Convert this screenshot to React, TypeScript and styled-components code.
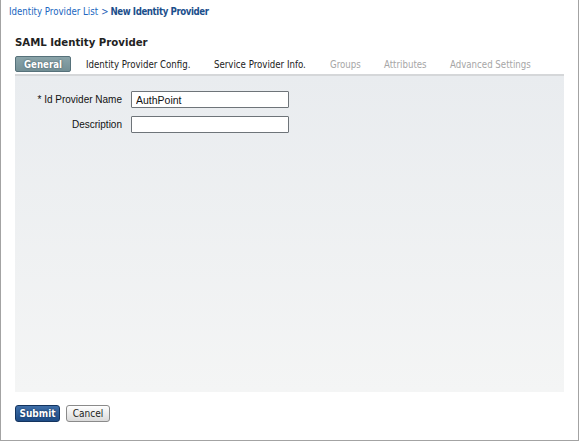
import React from "react";
import styled, { createGlobalStyle } from "styled-components";

const Global = createGlobalStyle`
  html, body { margin: 0; padding: 0; background: #fff; }
  body { font-family: "DejaVu Sans", sans-serif; }
  * { box-sizing: border-box; }
`;

const Frame = styled.div`
  width: 579px;
  height: 441px;
  border-left: 1px solid #a3a3a3;
  border-right: 1px solid #a3a3a3;
  border-bottom: 1px solid #a3a3a3;
  display: flex;
  flex-direction: column;
  background: #fff;
`;

const Breadcrumb = styled.div`
  padding: 6px 0 0 8px;
  height: 24px;
  font-size: 9.6px;
  color: #1f62b8;
  font-family: "DejaVu Sans Condensed", "DejaVu Sans", sans-serif;
  white-space: nowrap;
`;

const Crumb = styled.a`
  color: #2066c0;
  text-decoration: none;
`;

const Sep = styled.span`
  margin: 0 2px 0 3px;
`;

const Current = styled.span`
  color: #1c4f8c;
  font-weight: bold;
  letter-spacing: -0.4px;
`;

const Title = styled.h1`
  margin: 11px 0 0 14px;
  font-size: 11.3px;
  font-weight: bold;
  color: #222;
  font-family: "DejaVu Sans Condensed", "DejaVu Sans", sans-serif;
  height: 15px;
  line-height: 15px;
`;

const Tabs = styled.div`
  margin: 6px 14px 0 14px;
  display: flex;
  align-items: center;
  height: 16px;
  padding-bottom: 2px;
  border-bottom: 2px solid #d5d7d9;
  box-sizing: content-box;
`;

const Tab = styled.div<{ $active?: boolean; $disabled?: boolean; $w: number }>`
  font-family: "DejaVu Sans Condensed", "DejaVu Sans", sans-serif;
  font-size: 9.6px;
  height: 16px;
  line-height: 14px;
  padding-top: 1px;
  width: ${(p) => p.$w}px;
  flex: none;
  color: ${(p) => (p.$disabled ? "#a6a6a6" : "#222")};
  ${(p) =>
    p.$active
      ? `
    background: linear-gradient(#8aa4a9, #738f95);
    border: 1px solid #56717a;
    border-radius: 2px;
    color: #fff;
    font-weight: bold;
    text-align: center;
    text-shadow: 0 0 2px #3d555c;
  `
      : `border: 1px solid transparent;`}
`;

const Panel = styled.div`
  margin: 0 14px;
  height: 316px;
  background: linear-gradient(#e9ecef, #f4f5f5);
  padding-top: 15px;
  display: flex;
  flex-direction: column;
  gap: 8px;
`;

const Row = styled.div`
  display: flex;
  align-items: center;
  height: 17px;
`;

const Label = styled.label`
  width: 107px;
  text-align: right;
  font-family: "Liberation Sans", Arial, sans-serif;
  font-size: 10px;
  color: #111;
`;

const Input = styled.input`
  margin-left: 9px;
  width: 158px;
  height: 17px;
  border: 1px solid #6e7479;
  border-radius: 1px;
  background: #fff;
  font-family: "Liberation Sans", Arial, sans-serif;
  font-size: 10.5px;
  padding: 0 4px;
  color: #111;
  outline: none;
`;

const Footer = styled.div`
  display: flex;
  gap: 6px;
  padding: 13px 0 0 14px;
`;

const Button = styled.button<{ $primary?: boolean }>`
  height: 17px;
  padding: 0;
  font-family: "DejaVu Sans Condensed", "DejaVu Sans", sans-serif;
  font-size: 10px;
  border-radius: 3px;
  line-height: 14px;
  cursor: pointer;
  ${(p) =>
    p.$primary
      ? `
    width: 45px;
    background: linear-gradient(#3f6fa8, #1d4b85);
    border: 1px solid #13335e;
    color: #fff;
    font-weight: bold;
    text-shadow: 0 0 2px #0b2446;
  `
      : `
    width: 44px;
    background: linear-gradient(#ffffff, #dadada);
    border: 1px solid #8a8a8a;
    color: #222;
  `}
`;

export default function App() {
  return (
    <>
      <Global />
      <Frame>
        <Breadcrumb>
          <Crumb href="#">Identity Provider List</Crumb><Sep>&gt;</Sep><Current>New Identity Provider</Current>
        </Breadcrumb>
        <Title>SAML Identity Provider</Title>
        <Tabs>
          <Tab $active $w={56}>General</Tab>
          <Tab $w={14} />
          <Tab $w={128}>Identity Provider Config.</Tab>
          <Tab $w={116}>Service Provider Info.</Tab>
          <Tab $disabled $w={54}>Groups</Tab>
          <Tab $disabled $w={66}>Attributes</Tab>
          <Tab $disabled $w={110}>Advanced Settings</Tab>
        </Tabs>
        <Panel>
          <Row>
            <Label>* Id Provider Name</Label>
            <Input defaultValue="AuthPoint" />
          </Row>
          <Row>
            <Label>Description</Label>
            <Input defaultValue="" />
          </Row>
        </Panel>
        <Footer>
          <Button $primary>Submit</Button>
          <Button>Cancel</Button>
        </Footer>
      </Frame>
    </>
  );
}
